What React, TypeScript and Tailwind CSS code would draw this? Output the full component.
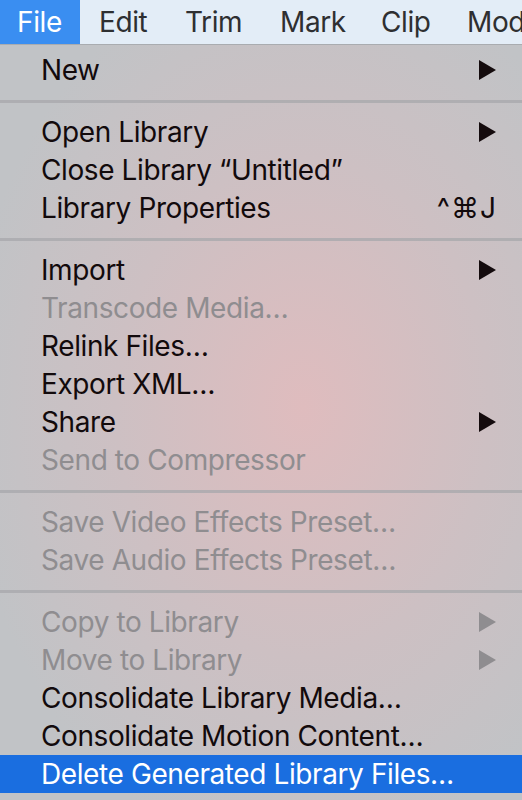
import React from 'react';

type Item =
    | { kind: 'item'; label: string; disabled?: boolean; submenu?: boolean; shortcut?: string; active?: boolean }
    | { kind: 'sep' };

const items: Item[] = [
    { kind: 'item', label: 'New', submenu: true },
    { kind: 'sep' },
    { kind: 'item', label: 'Open Library', submenu: true },
    { kind: 'item', label: 'Close Library \u201CUntitled\u201D' },
    { kind: 'item', label: 'Library Properties', shortcut: '^\u2318J' },
    { kind: 'sep' },
    { kind: 'item', label: 'Import', submenu: true },
    { kind: 'item', label: 'Transcode Media\u2026', disabled: true },
    { kind: 'item', label: 'Relink Files\u2026' },
    { kind: 'item', label: 'Export XML\u2026' },
    { kind: 'item', label: 'Share', submenu: true },
    { kind: 'item', label: 'Send to Compressor', disabled: true },
    { kind: 'sep' },
    { kind: 'item', label: 'Save Video Effects Preset\u2026', disabled: true },
    { kind: 'item', label: 'Save Audio Effects Preset\u2026', disabled: true },
    { kind: 'sep' },
    { kind: 'item', label: 'Copy to Library', disabled: true, submenu: true },
    { kind: 'item', label: 'Move to Library', disabled: true, submenu: true },
    { kind: 'item', label: 'Consolidate Library Media\u2026' },
    { kind: 'item', label: 'Consolidate Motion Content\u2026' },
    { kind: 'item', label: 'Delete Generated Library Files\u2026', active: true },
];

// menu bar titles with the width each one takes
const menus = [
    { label: 'Edit', w: 'w-[86px]' },
    { label: 'Trim', w: 'w-[95px]' },
    { label: 'Mark', w: 'w-[101px]' },
    { label: 'Clip', w: 'w-[86px]' },
    { label: 'Mod', w: 'w-[60px]' },
];

const Arrow = ({ color }: { color: string }) => (
    <svg width="18" height="20" viewBox="0 0 18 20">
        <path d="M0 0 L17 10 L0 20 Z" fill={color} />
    </svg>
);

const App = () => {
    return (
        <div
            className="w-[522px] h-[800px] overflow-hidden flex flex-col text-[28px] leading-none tracking-[-0.4px]"
            style={{ fontFamily: 'Inter, "Liberation Sans", sans-serif' }}
        >
            {/* menu bar */}
            <div className="h-[45px] shrink-0 flex items-stretch bg-[#e3edf7] border-b border-[#a9acb0] whitespace-nowrap overflow-hidden">
                <div className="w-[80px] shrink-0 bg-[#3a8ef1] text-white flex items-center pl-[17px]">File</div>
                <div className="flex items-center text-[#2e2f31] pl-[19px]">
                    {menus.map(m => (
                        <span key={m.label} className={m.w + ' shrink-0'}>{m.label}</span>
                    ))}
                </div>
            </div>

            {/* dropdown */}
            <div className="flex-1 flex flex-col pt-[6px] bg-[radial-gradient(ellipse_65%_60%_at_58%_48%,#dfbcbe_0%,#cdc0c3_55%,#c1c3c6_100%)]">
                {items.map((it, i) =>
                    it.kind === 'sep' ? (
                        <div key={i} className="h-[24px] flex items-center">
                            <div className="w-full h-[3px] bg-[#a9a9ac]/80" />
                        </div>
                    ) : (
                        <div
                            key={i}
                            className={
                                'h-[38px] shrink-0 flex items-center justify-between pl-[41px] pr-[25px] ' +
                                (it.active
                                    ? 'bg-[#1a6ee0] text-white'
                                    : it.disabled
                                    ? 'text-[#8f8d90]'
                                    : 'text-[#120a0c]')
                            }
                        >
                            <span>{it.label}</span>
                            {it.submenu && <Arrow color={it.disabled ? '#8f8d90' : '#140b0d'} />}
                            {it.shortcut && <span className="tracking-[1px]">{it.shortcut}</span>}
                        </div>
                    )
                )}
            </div>
        </div>
    );
};

export default App;
